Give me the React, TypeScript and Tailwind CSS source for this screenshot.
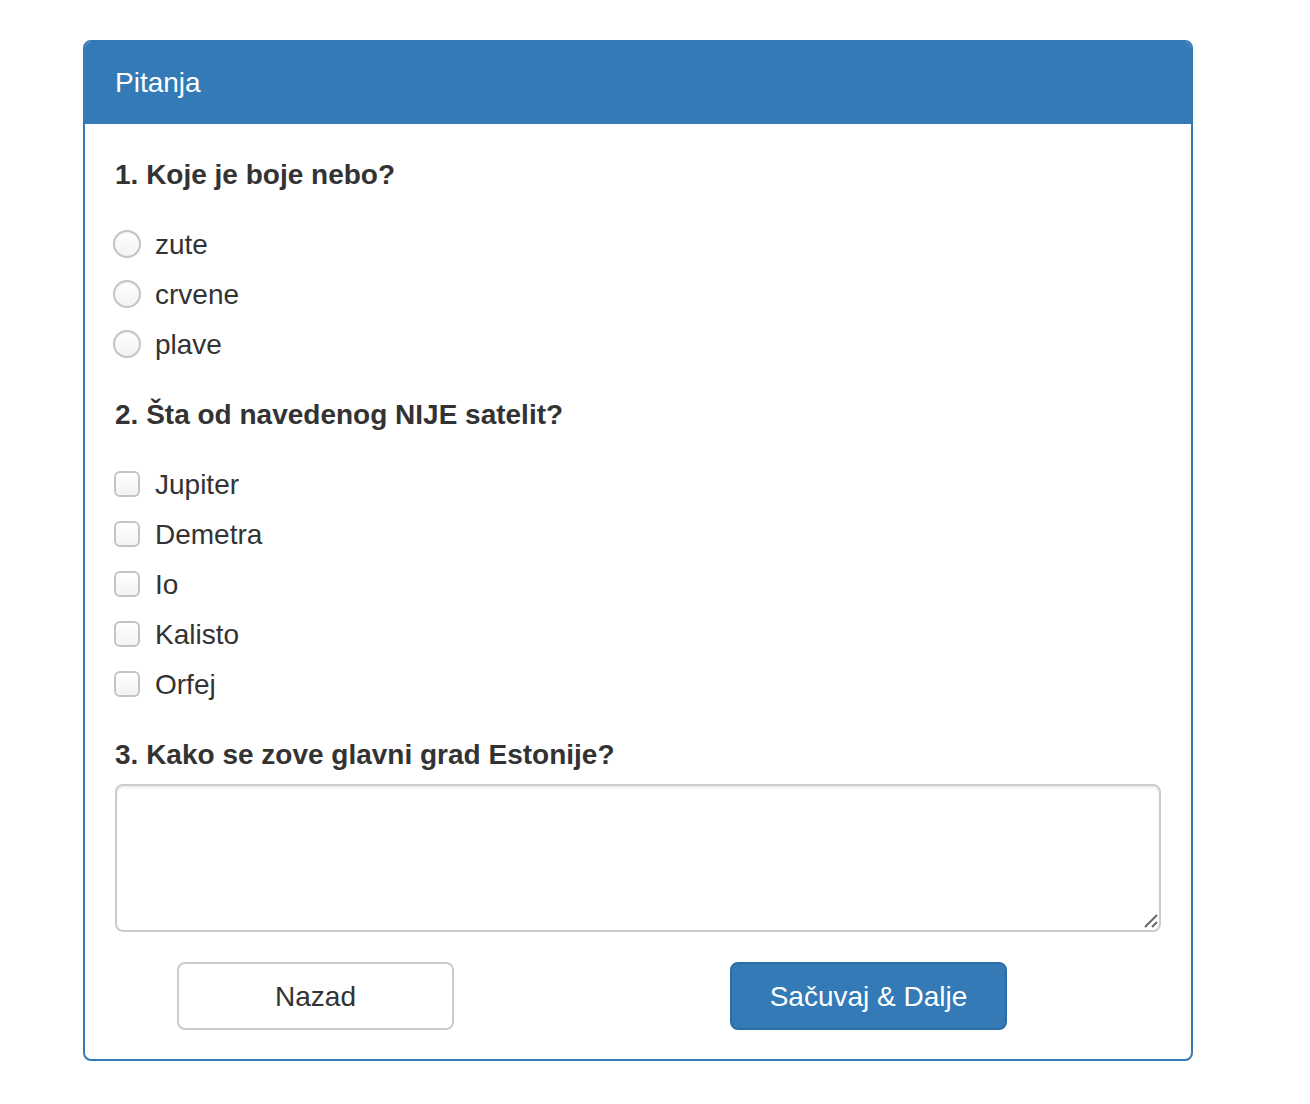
import React from 'react';

const radioOptions = ['zute', 'crvene', 'plave'];
const checkOptions = ['Jupiter', 'Demetra', 'Io', 'Kalisto', 'Orfej'];

const Radio: React.FC<{ label: string }> = ({ label }) => (
  <label className="flex h-[50px] items-center">
    <span className="ml-[-2px] h-[28px] w-[28px] rounded-full border-2 border-[#c4c4c4] bg-gradient-to-b from-white to-[#f3f3f3] shadow-[inset_0_1px_1px_rgba(0,0,0,0.06)]" />
    <span className="ml-[14px] pt-[2px] text-[28px] text-[#333]">{label}</span>
  </label>
);

const Check: React.FC<{ label: string }> = ({ label }) => (
  <label className="flex h-[50px] items-center">
    <span className="ml-[-1px] h-[26px] w-[26px] rounded-[6px] border-2 border-[#c4c4c4] bg-gradient-to-b from-white to-[#f3f3f3]" />
    <span className="ml-[15px] pt-[2px] text-[28px] text-[#333]">{label}</span>
  </label>
);

const Question: React.FC<{ title: string }> = ({ title }) => (
  <h4 className="h-[40px] pt-[1px] text-[28px] font-bold leading-[40px] text-[#333]">{title}</h4>
);

export default function App() {
  return (
    <div className="min-h-[1104px] bg-white pt-[40px] font-['Liberation_Sans',Arial,sans-serif]">
      <div className="ml-[83px] w-[1110px] overflow-hidden rounded-[8px] border-2 border-[#337ab7]">
        <div className="flex h-[82px] items-center bg-[#337ab7] px-[30px] text-[28px] text-white">
          Pitanja
        </div>
        <div className="px-[30px] pt-[30px] pb-[29px]">
          <Question title="1. Koje je boje nebo?" />
          <div className="mt-[25px]">
            {radioOptions.map((o) => (
              <Radio key={o} label={o} />
            ))}
          </div>
          <div className="mt-[25px]">
            <Question title="2. Šta od navedenog NIJE satelit?" />
          </div>
          <div className="mt-[25px]">
            {checkOptions.map((o) => (
              <Check key={o} label={o} />
            ))}
          </div>
          <div className="mt-[25px]">
            <Question title="3. Kako se zove glavni grad Estonije?" />
          </div>
          <div className="relative mt-[10px]">
            <textarea className="block h-[148px] w-full resize-none rounded-[8px] border-2 border-[#ccc] bg-white shadow-[inset_0_2px_2px_rgba(0,0,0,0.075)] outline-none" />
            <svg
              className="pointer-events-none absolute right-[3px] bottom-[4px]"
              width="14"
              height="14"
              viewBox="0 0 14 14"
            >
              <line x1="1" y1="13" x2="13" y2="1" stroke="#666" strokeWidth="2" />
              <line x1="8" y1="13" x2="13" y2="8" stroke="#666" strokeWidth="2" />
            </svg>
          </div>
          <div className="mt-[30px] flex">
            <button
              type="button"
              className="ml-[62px] h-[68px] w-[277px] rounded-[8px] border-2 border-[#ccc] bg-white pt-[2px] text-[28px] text-[#333]"
            >
              Nazad
            </button>
            <button
              type="button"
              className="ml-[276px] h-[68px] w-[277px] rounded-[8px] border-2 border-[#2e6da4] bg-[#337ab7] pt-[2px] text-[28px] text-white"
            >
              Sačuvaj &amp; Dalje
            </button>
          </div>
        </div>
      </div>
    </div>
  );
}
